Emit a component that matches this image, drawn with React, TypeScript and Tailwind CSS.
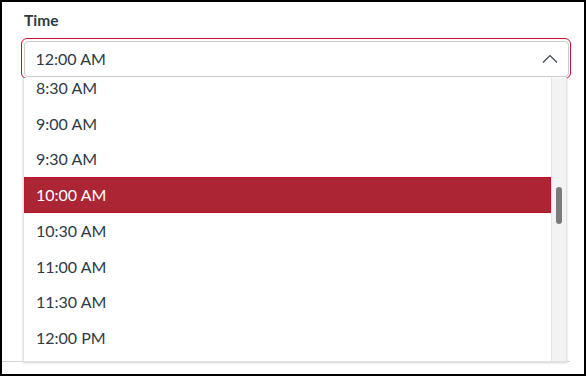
import React from "react";

const items = ["8:30 AM", "9:00 AM", "9:30 AM", "10:00 AM", "10:30 AM", "11:00 AM", "11:30 AM", "12:00 PM"];

export default function App() {
  return (
    <div
      className="relative w-[586px] h-[376px] border-2 border-black bg-white overflow-hidden text-[#2d3b45]"
      style={{ fontFamily: "Lato, 'Noto Sans', sans-serif" }}
    >
      <div className="pl-[22px] pt-[9px] text-[15.5px] font-bold leading-[18px]">Time</div>
      <div className="ml-[19px] mr-[13px] mt-[9px] rounded-[6px] border-[1.5px] border-[#c8102e] p-[1.5px]">
        <div className="flex h-[36px] items-center justify-between rounded-[4px] border border-[#c7cdd1] pl-[11px] pr-[10px]">
          <span className="text-[16px]">12:00 AM</span>
          <svg width="16" height="10" viewBox="0 0 16 10" fill="none">
            <path d="M1 8.5 L8 1.5 L15 8.5" stroke="#3d4852" strokeWidth="1.2" />
          </svg>
        </div>
      </div>
      <div className="mt-[282px] mr-[14px] border-b border-[#d5d5d5]" />

      <div className="absolute left-[21px] top-[76px] flex h-[284px] w-[544px] overflow-hidden border border-t-0 border-[#e2e2e2] bg-white shadow-[0_1px_2px_rgba(0,0,0,0.18)]">
        <div className="flex-1 overflow-hidden">
          <div className="mt-[-8px] flex flex-col">
            {items.map((t) => (
              <div
                key={t}
                className={
                  t === "10:00 AM"
                    ? "flex h-[35.75px] items-center border border-[#c0142c] bg-[#ab2535] pl-[11px] text-[16px] text-white"
                    : "flex h-[35.75px] items-center pl-[12px] text-[16px]"
                }
              >
                {t}
              </div>
            ))}
          </div>
        </div>
        <div className="relative w-[15px] border-l border-[#e6e6e6] bg-[#f3f3f3]">
          <div className="absolute left-[4px] top-[109px] h-[37px] w-[6px] rounded-full bg-[#7b7b7b]" />
        </div>
      </div>
    </div>
  );
}
